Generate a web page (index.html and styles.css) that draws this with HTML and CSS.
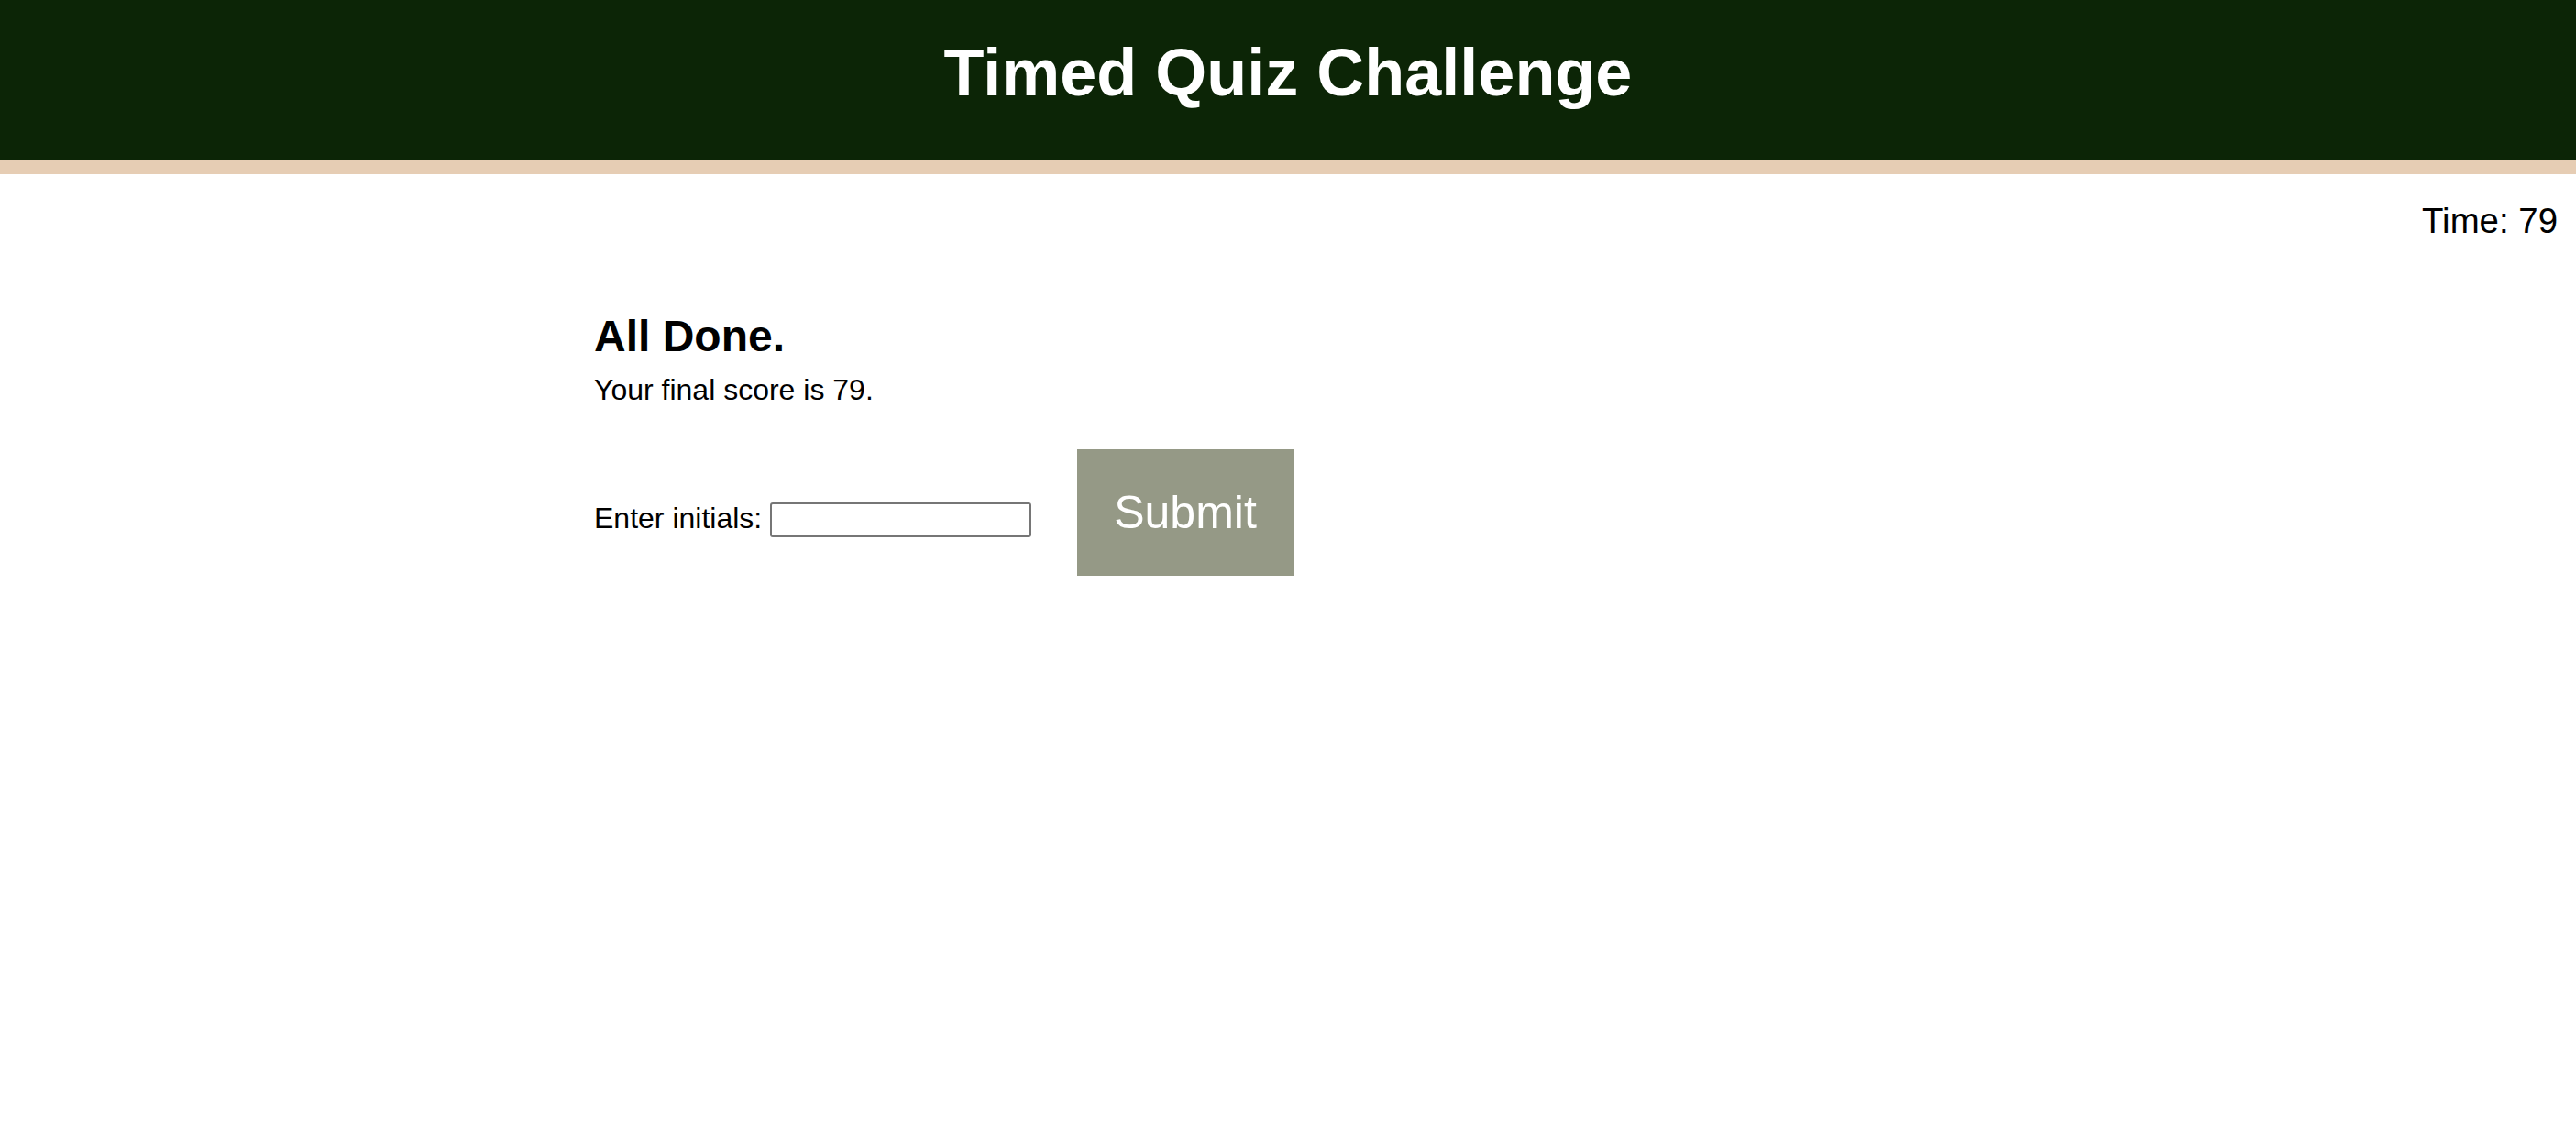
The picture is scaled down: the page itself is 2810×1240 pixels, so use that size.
FILE: index.html
```html
<!DOCTYPE html>
<html lang="en">
<head>
<meta charset="utf-8">
<title>Timed Quiz Challenge</title>
<link rel="stylesheet" href="styles.css">
</head>
<body>
<header class="site-header">
  <h1 class="site-title">Timed Quiz Challenge</h1>
</header>
<div class="timer">Time: 79</div>
<main class="done">
  <h2 class="done-title">All Done.</h2>
  <p class="done-score">Your final score is 79.</p>
  <form class="initials-row">
    <label class="initials-label" for="initials">Enter initials:</label>
    <input class="initials-input" id="initials" type="text">
    <button class="submit-btn" type="button">Submit</button>
  </form>
</main>
</body>
</html>
```
FILE: styles.css
```css
html, body {
  margin: 0;
  padding: 0;
  background: #ffffff;
  font-family: "Liberation Sans", Arial, sans-serif;
  color: #000000;
}

.site-header {
  background: #0c2506;
  border-bottom: 16px solid #e6cdb4;
  height: 174px;
  box-sizing: content-box;
  padding: 0;
}

.site-title {
  margin: 0;
  padding-top: 38px;
  text-align: center;
  font-size: 72px;
  font-weight: 700;
  color: #ffffff;
  line-height: normal;
}

.timer {
  text-align: right;
  font-size: 38.4px;
  padding-right: 20px;
  margin-top: 29px;
}

.done {
  padding-left: 648px;
  margin-top: 76px;
}

.done-title {
  margin: 0;
  font-size: 48px;
  font-weight: 700;
  line-height: normal;
}

.done-score {
  margin: 13px 0 0;
  font-size: 32px;
  line-height: normal;
}

.initials-row {
  display: flex;
  align-items: baseline;
  margin-top: 46px;
}

.initials-label {
  font-size: 32px;
  margin-right: 9px;
}

.initials-input {
  width: 285px;
  height: 38px;
  box-sizing: border-box;
  font-family: "Liberation Sans", Arial, sans-serif;
  font-size: 28px;
  padding: 0 3px;
  border: 2px solid #767676;
  border-radius: 3px;
  background: #ffffff;
  margin: 0;
}

.submit-btn {
  margin-left: 50px;
  background: #959986;
  color: #ffffff;
  border: none;
  border-radius: 0;
  font-family: "Liberation Sans", Arial, sans-serif;
  font-size: 50px;
  line-height: normal;
  padding: 40px 40px;
  cursor: pointer;
}
```
